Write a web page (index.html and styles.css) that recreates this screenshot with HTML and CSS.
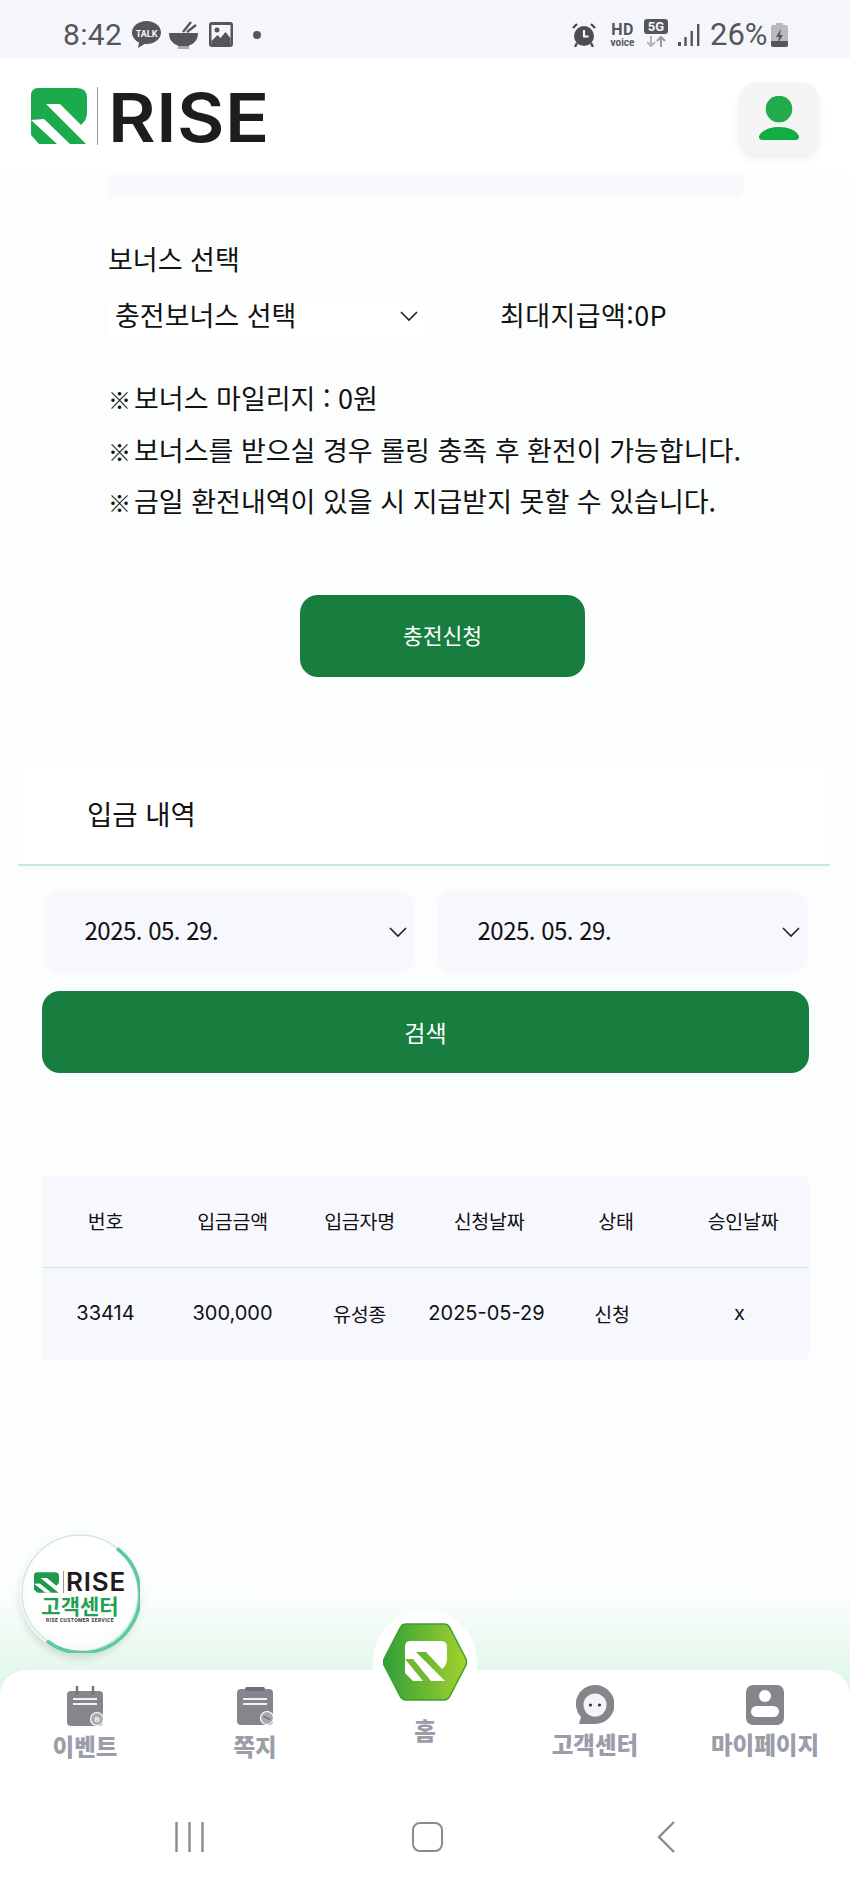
FILE: index.html
```html
<!DOCTYPE html>
<html lang="ko">
<head>
  <meta charset="UTF-8" />
  <meta name="viewport" content="width=device-width, initial-scale=1.0"/>
  <title>RISE 충전신청</title>
  <link rel="stylesheet" href="styles.css">
</head>
<body>
  <div class="page">
    <div class="status">
      <div class="status-left">
        <span class="clock">8:42</span>
        <svg class="ic-talk" viewBox="0 0 29 27"><path d="M14.500 0C6.500 0 0 5 0 11.500c0 4.300 2.800 8 7 10l-1 5.500 6.500-4c.7.100 1.300.100 2 .100 8 0 14.500-5.200 14.500-11.600S22.500 0 14.500 0z" fill="#55565c"/><text x="14.500" y="15.500" text-anchor="middle" class="talk-text">TALK</text></svg>
        <svg class="ic-bowl" viewBox="0 0 29 28"><path d="M0 12h29c0 7-4 11-9 12.500v1H9v-1C4 23 0 19 0 12z" fill="#55565c"/><rect x="9" y="26" width="11" height="2" fill="#a9aab0"/><path d="M14 11 22 1M18 11l9-7" stroke="#55565c" stroke-width="2.400" fill="none"/></svg>
        <svg class="ic-pic" viewBox="0 0 24 25"><rect width="24" height="25" rx="3" fill="#55565c"/><rect x="2.500" y="3" width="19" height="19" fill="#f5f6fb"/><circle cx="8" cy="8" r="2.500" fill="#55565c"/><path d="M2.500 19l6-6 3 3 5-6 5 6v6h-19z" fill="#55565c"/></svg>
        <span class="dot"></span>
      </div>
      <div class="status-right">
        <svg class="ic-alarm" viewBox="0 0 24 24"><circle cx="12" cy="13" r="10" fill="#4c4d53"/><path d="M12 7v6.500h4.500" stroke="#f5f6fb" stroke-width="2.200" fill="none"/><path d="M1 5l4-4M23 5l-4-4" stroke="#4c4d53" stroke-width="2.400"/><path d="M5 20l-2 4M19 20l2 4" stroke="#4c4d53" stroke-width="2.400"/></svg>
        <div class="hd"><b>HD</b><small>voice</small></div>
        <div class="net">
          <span class="net-box">5G</span>
          <svg viewBox="0 0 24 11"><path d="M7 0v10M3 6l4 4 4-4" stroke="#b4b5ba" stroke-width="2" fill="none"/><path d="M17 11V1M13 5l4-4 4 4" stroke="#9a9ba1" stroke-width="2" fill="none"/></svg>
        </div>
        <svg class="ic-signal" viewBox="0 0 22 22"><rect y="18" width="3" height="4" fill="#55565c"/><rect x="6.300" y="13" width="2.400" height="9" fill="#55565c"/><rect x="12.500" y="7" width="2.400" height="15" fill="#55565c"/><rect x="19" y="0" width="2.400" height="22" fill="#55565c"/></svg>
        <span class="batt-text">26%</span>
        <svg class="ic-batt" viewBox="0 0 17 24"><rect x="5" width="7" height="3" fill="#b9babf"/><rect y="2" width="17" height="22" rx="2" fill="#b9babf"/><path d="M0 18h17v4a2 2 0 0 1-2 2H2a2 2 0 0 1-2-2z" fill="#55565c"/><path d="M10 6 5 14h3l-1 6 5-8H9z" fill="#55565c"/></svg>
      </div>
    </div>

    <header class="header">
      <div class="logo">
        <svg class="logo-mark" viewBox="0 0 56 56">
          <path d="M7 0H46Q56 0 56 10V25Q56 32 50 37L29 16H15L55 56H8L0 47V8Q0 0 7 0z" fill="#1bab4c"/>
          <path d="M0 32 13 31 39 56H26z" fill="#fff"/>
        </svg>
        <span class="logo-line"></span>
        <span class="logo-text">RISE</span>
      </div>
      <button class="profile">
        <svg viewBox="0 0 40 44"><circle cx="20" cy="13" r="13.300" fill="#22ab4b"/><path d="M0 40C3 34 11 31 20 31s17 3 20 9c.5 2-1 4-3 4H3c-2 0-3.500-2-3-4z" fill="#12ad43"/></svg>
      </button>
    </header>

    <main class="main">
      <div class="strip"></div>

      <section class="bonus">
        <label class="bonus-label">보너스 선택</label>
        <div class="bonus-row">
          <div class="bonus-select">
            <span>충전보너스 선택</span>
            <svg class="chev" viewBox="0 0 18 11"><path d="M1 1l8 8 8-8" stroke="#222" stroke-width="1.600" fill="none"/></svg>
          </div>
          <span class="bonus-max">최대지급액:0P</span>
        </div>
        <ul class="notes">
          <li><span class="note-mark">※</span>보너스 마일리지 : 0원</li>
          <li><span class="note-mark">※</span>보너스를 받으실 경우 롤링 충족 후 환전이 가능합니다.</li>
          <li><span class="note-mark">※</span>금일 환전내역이 있을 시 지급받지 못할 수 있습니다.</li>
        </ul>
        <button class="btn btn-apply">충전신청</button>
      </section>

      <section class="history">
        <h3 class="history-title">입금 내역</h3>
        <div class="dates">
          <div class="date-box">
            <span>2025. 05. 29.</span>
            <svg class="chev" viewBox="0 0 18 11"><path d="M1 1l8 8 8-8" stroke="#222" stroke-width="1.600" fill="none"/></svg>
          </div>
          <div class="date-box">
            <span>2025. 05. 29.</span>
            <svg class="chev" viewBox="0 0 18 11"><path d="M1 1l8 8 8-8" stroke="#222" stroke-width="1.600" fill="none"/></svg>
          </div>
        </div>
        <button class="btn btn-search">검색</button>

        <table class="deposit-table">
          <thead>
            <tr>
              <th>번호</th>
              <th>입금금액</th>
              <th>입금자명</th>
              <th>신청날짜</th>
              <th>상태</th>
              <th>승인날짜</th>
            </tr>
          </thead>
          <tbody>
            <tr>
              <td class="num">33414</td>
              <td class="num">300,000</td>
              <td>유성종</td>
              <td class="num">2025-05-29</td>
              <td>신청</td>
              <td class="num">x</td>
            </tr>
          </tbody>
        </table>
      </section>
    </main>

    <a class="cs-float">
      <svg class="cs-ring" viewBox="0 0 120 120">
        <circle cx="60" cy="60" r="58" fill="none" stroke="#d3e8de" stroke-width="1.500"/>
        <path d="M97 15.500A58 58 0 0 1 27 108" fill="none" stroke="#5ccb9c" stroke-width="3.500"/>
      </svg>
      <div class="cs-logo">
        <svg class="cs-mark" viewBox="0 0 56 46">
          <path d="M7 0H46Q56 0 56 8V20Q56 26 50 30L29 13H15L55 46H8L0 39V7Q0 0 7 0z" fill="#1f9a4b"/>
          <path d="M0 26 13 25 39 46H26z" fill="#fff"/>
        </svg>
        <span class="cs-line"></span>
        <span class="cs-rise">RISE</span>
      </div>
      <div class="cs-name">고객센터</div>
      <div class="cs-sub">RISE CUSTOMER SERVICE</div>
    </a>

    <nav class="tabbar">
      <div class="tabs">
        <div class="tab">
          <svg class="tab-ic" viewBox="0 0 38 40">
            <path d="M5 5H33Q37 5 37 9V36Q37 40 33 40H5Q1 40 1 36V9Q1 5 5 5z" fill="#85868b"/>
            <path d="M11 0v9M27 0v9" stroke="#77787d" stroke-width="2.500"/>
            <path d="M7 13H31M7 18H31" stroke="#f2f2f4" stroke-width="2.200"/>
            <circle cx="31" cy="33" r="6.500" fill="#a9aaaf" stroke="#fff" stroke-width="1.200"/>
            <text x="31" y="36" text-anchor="middle" class="badge-text">B</text>
          </svg>
          <span class="tab-label">이벤트</span>
        </div>
        <div class="tab">
          <svg class="tab-ic" viewBox="0 0 38 38">
            <path d="M5 2H33Q37 2 37 6V34Q37 38 33 38H5Q1 38 1 34V6Q1 2 5 2z" fill="#85868b"/>
            <rect x="9" y="0" width="20" height="4" rx="2" fill="#6f7075"/>
            <path d="M7 12H31M7 17H31" stroke="#f2f2f4" stroke-width="2.200"/>
            <circle cx="31" cy="31" r="6.500" fill="#a9aaaf" stroke="#fff" stroke-width="1.200"/>
            <path d="M27.500 29.500 34.500 32.500" stroke="#6f7075" stroke-width="1.600"/>
          </svg>
          <span class="tab-label">쪽지</span>
        </div>
        <div class="tab tab-home">
          <div class="home-circle">
            <svg viewBox="0 0 84 78">
              <defs>
                <linearGradient id="hexfill" x1="0" y1="0" x2="1" y2="0">
                  <stop offset="0" stop-color="#2f9f39"/>
                  <stop offset="1" stop-color="#a5d22c"/>
                </linearGradient>
              </defs>
              <path d="M23 1H61Q65 1 67 5L83 36Q84 39 83 42L67 73Q65 77 61 77H23Q19 77 17 73L1 42Q0 39 1 36L17 5Q19 1 23 1z" fill="url(#hexfill)" stroke="#3c9e2e" stroke-width="1.500"/>
              <path d="M27 18H58Q64 18 64 24V36Q64 42 59 46L43 29H33L62 58H30L22 50V24Q22 18 27 18z" fill="#fff"/>
              <path d="M22 36H30L48 58H40z" fill="#74b934"/>
            </svg>
          </div>
          <span class="tab-label">홈</span>
        </div>
        <div class="tab tab-up">
          <svg class="tab-ic" viewBox="0 0 38 40">
            <path d="M19 0A19 19 0 1 1 19 39H3L5 32A19 19 0 0 1 19 0z" fill="#85868b"/>
            <circle cx="19" cy="20" r="11.500" fill="#f4f4f6"/>
            <circle cx="14.500" cy="20" r="1.600" fill="#33343a"/>
            <circle cx="23.500" cy="20" r="1.600" fill="#33343a"/>
          </svg>
          <span class="tab-label">고객센터</span>
        </div>
        <div class="tab tab-up">
          <svg class="tab-ic" viewBox="0 0 38 40">
            <rect width="38" height="40" rx="7" fill="#85868b"/>
            <circle cx="19" cy="11" r="6" fill="#fff"/>
            <rect x="5" y="21" width="28" height="11" rx="5.500" fill="#fff"/>
          </svg>
          <span class="tab-label">마이페이지</span>
        </div>
      </div>
      <div class="softkeys">
        <svg class="key-recent" viewBox="0 0 29 30"><path d="M1.500 0v30M14.500 0v30M27.500 0v30" stroke="#8a8b90" stroke-width="2.400"/></svg>
        <span class="key-home"></span>
        <svg class="key-back" viewBox="0 0 18 32"><path d="M17 1 2 16l15 15" stroke="#8a8b90" stroke-width="2.400" fill="none"/></svg>
      </div>
    </nav>
  </div>
</body>
</html>
```

FILE: styles.css
```css
* {
    box-sizing: border-box;
}
html, body {
    margin: 0;
    padding: 0;
}
body {
    font-family: "Noto Sans CJK KR", "Noto Sans", sans-serif;
    color: #111;
}
button {
    font-family: inherit;
    border: none;
    padding: 0;
}
.page {
    position: relative;
    width: 850px;
    height: 1889px;
    overflow: hidden;
    display: flex;
    flex-direction: column;
    background: linear-gradient(to bottom, #fcfefe 1590px, #e2f7ea 1680px);
}

/* status bar */
.status {
    height: 58px;
    flex: none;
    background-color: #f5f6fb;
    display: flex;
    justify-content: space-between;
    align-items: flex-start;
    padding: 0 62px 0 63px;
    color: #55565c;
}
.status-left, .status-right {
    display: flex;
    align-items: center;
    height: 58px;
    padding-top: 11px;
}
.clock {
    font-family: "Roboto", sans-serif;
    font-size: 30px;
    width: 69px;
    letter-spacing: 0.3px;
}
.ic-talk { width: 29px; height: 27px; }
.ic-bowl { width: 29px; height: 28px; margin-left: 8px; }
.ic-pic { width: 24px; height: 25px; margin-left: 11px; }
.talk-text {
    font-family: "Roboto", sans-serif;
    font-size: 9px;
    font-weight: 700;
    fill: #f5f6fb;
}
.dot {
    width: 8px;
    height: 8px;
    border-radius: 50%;
    background-color: #55565c;
    margin-left: 20px;
}
.ic-alarm { width: 24px; height: 24px; }
.hd {
    margin-left: 13px;
    width: 27px;
    display: flex;
    flex-direction: column;
    align-items: center;
    font-family: "Roboto", sans-serif;
    line-height: 1;
}
.hd b { font-size: 16px; letter-spacing: 0.5px; }
.hd small { font-size: 10px; font-weight: 700; }
.net {
    margin-left: 8px;
    width: 24px;
    display: flex;
    flex-direction: column;
    gap: 2px;
    margin-top: -4px;
}
.net-box {
    height: 15px;
    border-radius: 3px;
    background-color: #55565c;
    color: #f5f6fb;
    font-family: "Roboto", sans-serif;
    font-size: 13px;
    font-weight: 700;
    line-height: 15px;
    text-align: center;
}
.net svg { width: 24px; height: 11px; }
.ic-signal { width: 22px; height: 22px; margin-left: 10px; }
.batt-text {
    font-family: "Roboto", sans-serif;
    font-size: 31px;
    margin-left: 10px;
    width: 61px;
}
.ic-batt { width: 17px; height: 24px; }

/* header */
.header {
    height: 117px;
    flex: none;
    background-color: #fff;
    display: flex;
    justify-content: space-between;
    padding: 24px 31px 0 31px;
}
.logo {
    display: flex;
    align-items: flex-start;
    padding-top: 6px;
}
.logo-mark { width: 56px; height: 56px; }
.logo-line {
    width: 1px;
    height: 58px;
    margin: -1px 0 0 10px;
    background-color: #999;
}
.logo-text {
    font-family: "Inter", sans-serif;
    font-size: 67px;
    font-weight: 600;
    line-height: 56px;
    margin: 2px 0 0 10px;
    color: #1d1d1d;
    letter-spacing: 0.5px;
    transform: scaleX(1.09);
    transform-origin: left center;
}
.profile {
    width: 80px;
    height: 72px;
    border-radius: 18px;
    background-color: #f5f5f5;
    box-shadow: 0 5px 8px rgba(0, 0, 0, 0.07);
    display: flex;
    align-items: center;
    justify-content: center;
}
.profile svg { width: 40px; height: 44px; }

/* bonus */
.main {
    flex: 1;
}
.strip {
    height: 22px;
    margin: 0 107px 0 108px;
    background-color: #f8f8fd;
    border-radius: 0 0 6px 6px;
}
.bonus {
    padding-left: 108px;
}
.bonus-label {
    display: block;
    margin-top: 44px;
    font-size: 27px;
    line-height: 36px;
}
.bonus-row {
    display: flex;
    align-items: center;
    margin-top: 18px;
}
.bonus-select {
    width: 323px;
    height: 40px;
    display: flex;
    align-items: center;
    justify-content: space-between;
    padding: 0 13px 0 7px;
    font-size: 27px;
    background-color: #fff;
}
.bonus-select span {
    padding-bottom: 4px;
}
.bonus-max {
    margin-left: 69px;
    padding-bottom: 4px;
    font-size: 27px;
    letter-spacing: 0.4px;
}
.chev { width: 18px; height: 11px; }
.notes {
    list-style: none;
    margin: 34px 0 0 0;
    padding: 0;
    font-size: 27px;
    line-height: 51.500px;
    white-space: nowrap;
}
.note-mark {
    display: inline-block;
    width: 26px;
    font-size: 23px;
    font-weight: 900;
    line-height: 1;
}
.btn {
    display: block;
    height: 82px;
    padding-bottom: 4px;
    background-color: #177e40;
    color: #fff;
    text-align: center;
    border-radius: 18px;
}
.btn-apply {
    width: 285px;
    margin: 68.500px 0 0 192px;
    font-size: 21.500px;
}

/* history */
.history {
    margin-top: 88px;
}
.history-title {
    margin: 0 20px 0 18px;
    height: 101px;
    padding: 30px 0 0 69px;
    font-size: 27.500px;
    font-weight: 400;
    line-height: 36px;
    background-color: #fff;
    border-bottom: 2px solid #c0efd3;
}
.dates {
    display: flex;
    gap: 22px;
    margin: 25px 0 0 44px;
}
.date-box {
    width: 371px;
    height: 82px;
    background-color: #f7f8fe;
    border-radius: 16px;
    display: flex;
    align-items: center;
    justify-content: space-between;
    padding: 0 8px 0 40.500px;
    font-size: 24px;
    letter-spacing: -0.5px;
}
.date-box span {
    padding-bottom: 6px;
}
.btn-search {
    width: 767px;
    margin: 18px 0 0 42px;
    padding-bottom: 1px;
    font-size: 23px;
}
.deposit-table {
    width: 767px;
    margin: 104px 0 0 42px;
    border-collapse: collapse;
    table-layout: fixed;
    background-color: #f7f8fe;
    font-size: 19.500px;
    letter-spacing: -0.3px;
    text-align: center;
}
.deposit-table th {
    height: 90px;
    padding: 0 0 2px 0;
    font-weight: 400;
    border-bottom: 1.500px solid #c8eee4;
}
.deposit-table th:nth-child(4), .deposit-table th:nth-child(5) {
    padding-left: 5px;
}
.deposit-table td {
    height: 92px;
    padding: 0;
}
.deposit-table td:nth-child(5) {
    padding-right: 3px;
}
.deposit-table th:last-child, .deposit-table td:last-child {
    width: 132px;
}
.deposit-table td:last-child {
    padding-right: 7px;
}
.deposit-table .num {
    font-family: "Inter", sans-serif;
    font-size: 20px;
    letter-spacing: 0;
}
.badge-text {
    font-family: "Roboto", sans-serif;
    font-size: 8px;
    font-weight: 700;
    fill: #f2f2f4;
}

/* floating customer service */
.cs-float {
    position: absolute;
    left: 20px;
    top: 1533px;
    width: 120px;
    height: 120px;
    border-radius: 50%;
    background: radial-gradient(circle at 50% 45%, #fff 55%, #e3f7ee 100%);
    box-shadow: 0 5px 9px rgba(0, 0, 0, 0.12);
    display: flex;
    flex-direction: column;
    align-items: center;
    padding-top: 38px;
}
.cs-ring {
    position: absolute;
    left: 0;
    top: 0;
    width: 120px;
    height: 120px;
}
.cs-logo {
    display: flex;
    align-items: center;
    height: 22px;
}
.cs-mark { width: 25px; height: 21px; flex: none; }
.cs-line {
    width: 1px;
    height: 22px;
    margin: 0 2px 0 4px;
    background-color: #999;
}
.cs-rise {
    font-family: "Inter", sans-serif;
    font-size: 26px;
    font-weight: 600;
    line-height: 22px;
    color: #1d1d1d;
    letter-spacing: 0.8px;
}
.cs-name {
    margin-top: 2px;
    font-size: 21px;
    font-weight: 700;
    line-height: 20px;
    color: #22a152;
}
.cs-sub {
    margin-top: 2px;
    font-family: "Roboto", sans-serif;
    font-size: 5px;
    font-weight: 700;
    line-height: 7px;
    letter-spacing: 0.4px;
    color: #333;
    white-space: nowrap;
}

/* bottom nav */
.tabbar {
    height: 219px;
    flex: none;
    background-color: #fff;
    border-radius: 26px 26px 0 0;
}
.tabs {
    display: flex;
    height: 152px;
}
.tab {
    width: 170px;
    display: flex;
    flex-direction: column;
    align-items: center;
    padding-top: 16px;
}
.tab-ic {
    width: 38px;
    height: 40px;
    flex: none;
}
.tab-label {
    margin-top: 8px;
    font-size: 23.500px;
    font-weight: 900;
    line-height: 24px;
    color: #9b9ea8;
    white-space: nowrap;
}
.tab-up { padding-top: 15px; }
.tab-up .tab-label { margin-top: 7px; }
.tab-home {
    padding-top: 0;
}
.home-circle {
    flex: none;
    width: 104px;
    height: 104px;
    margin-top: -60px;
    border-radius: 50%;
    background-color: #fff;
    display: flex;
    align-items: center;
    justify-content: center;
}
.home-circle svg { width: 84px; height: 78px; }
.tab-home .tab-label { margin-top: 4px; }
.softkeys {
    display: flex;
    justify-content: center;
    align-items: center;
    height: 30px;
}
.key-recent { width: 29px; height: 30px; }
.key-home {
    width: 31px;
    height: 30px;
    margin: 0 214px 0 208px;
    border: 2.400px solid #8a8b90;
    border-radius: 8px;
}
.key-back { width: 18px; height: 32px; }
```
